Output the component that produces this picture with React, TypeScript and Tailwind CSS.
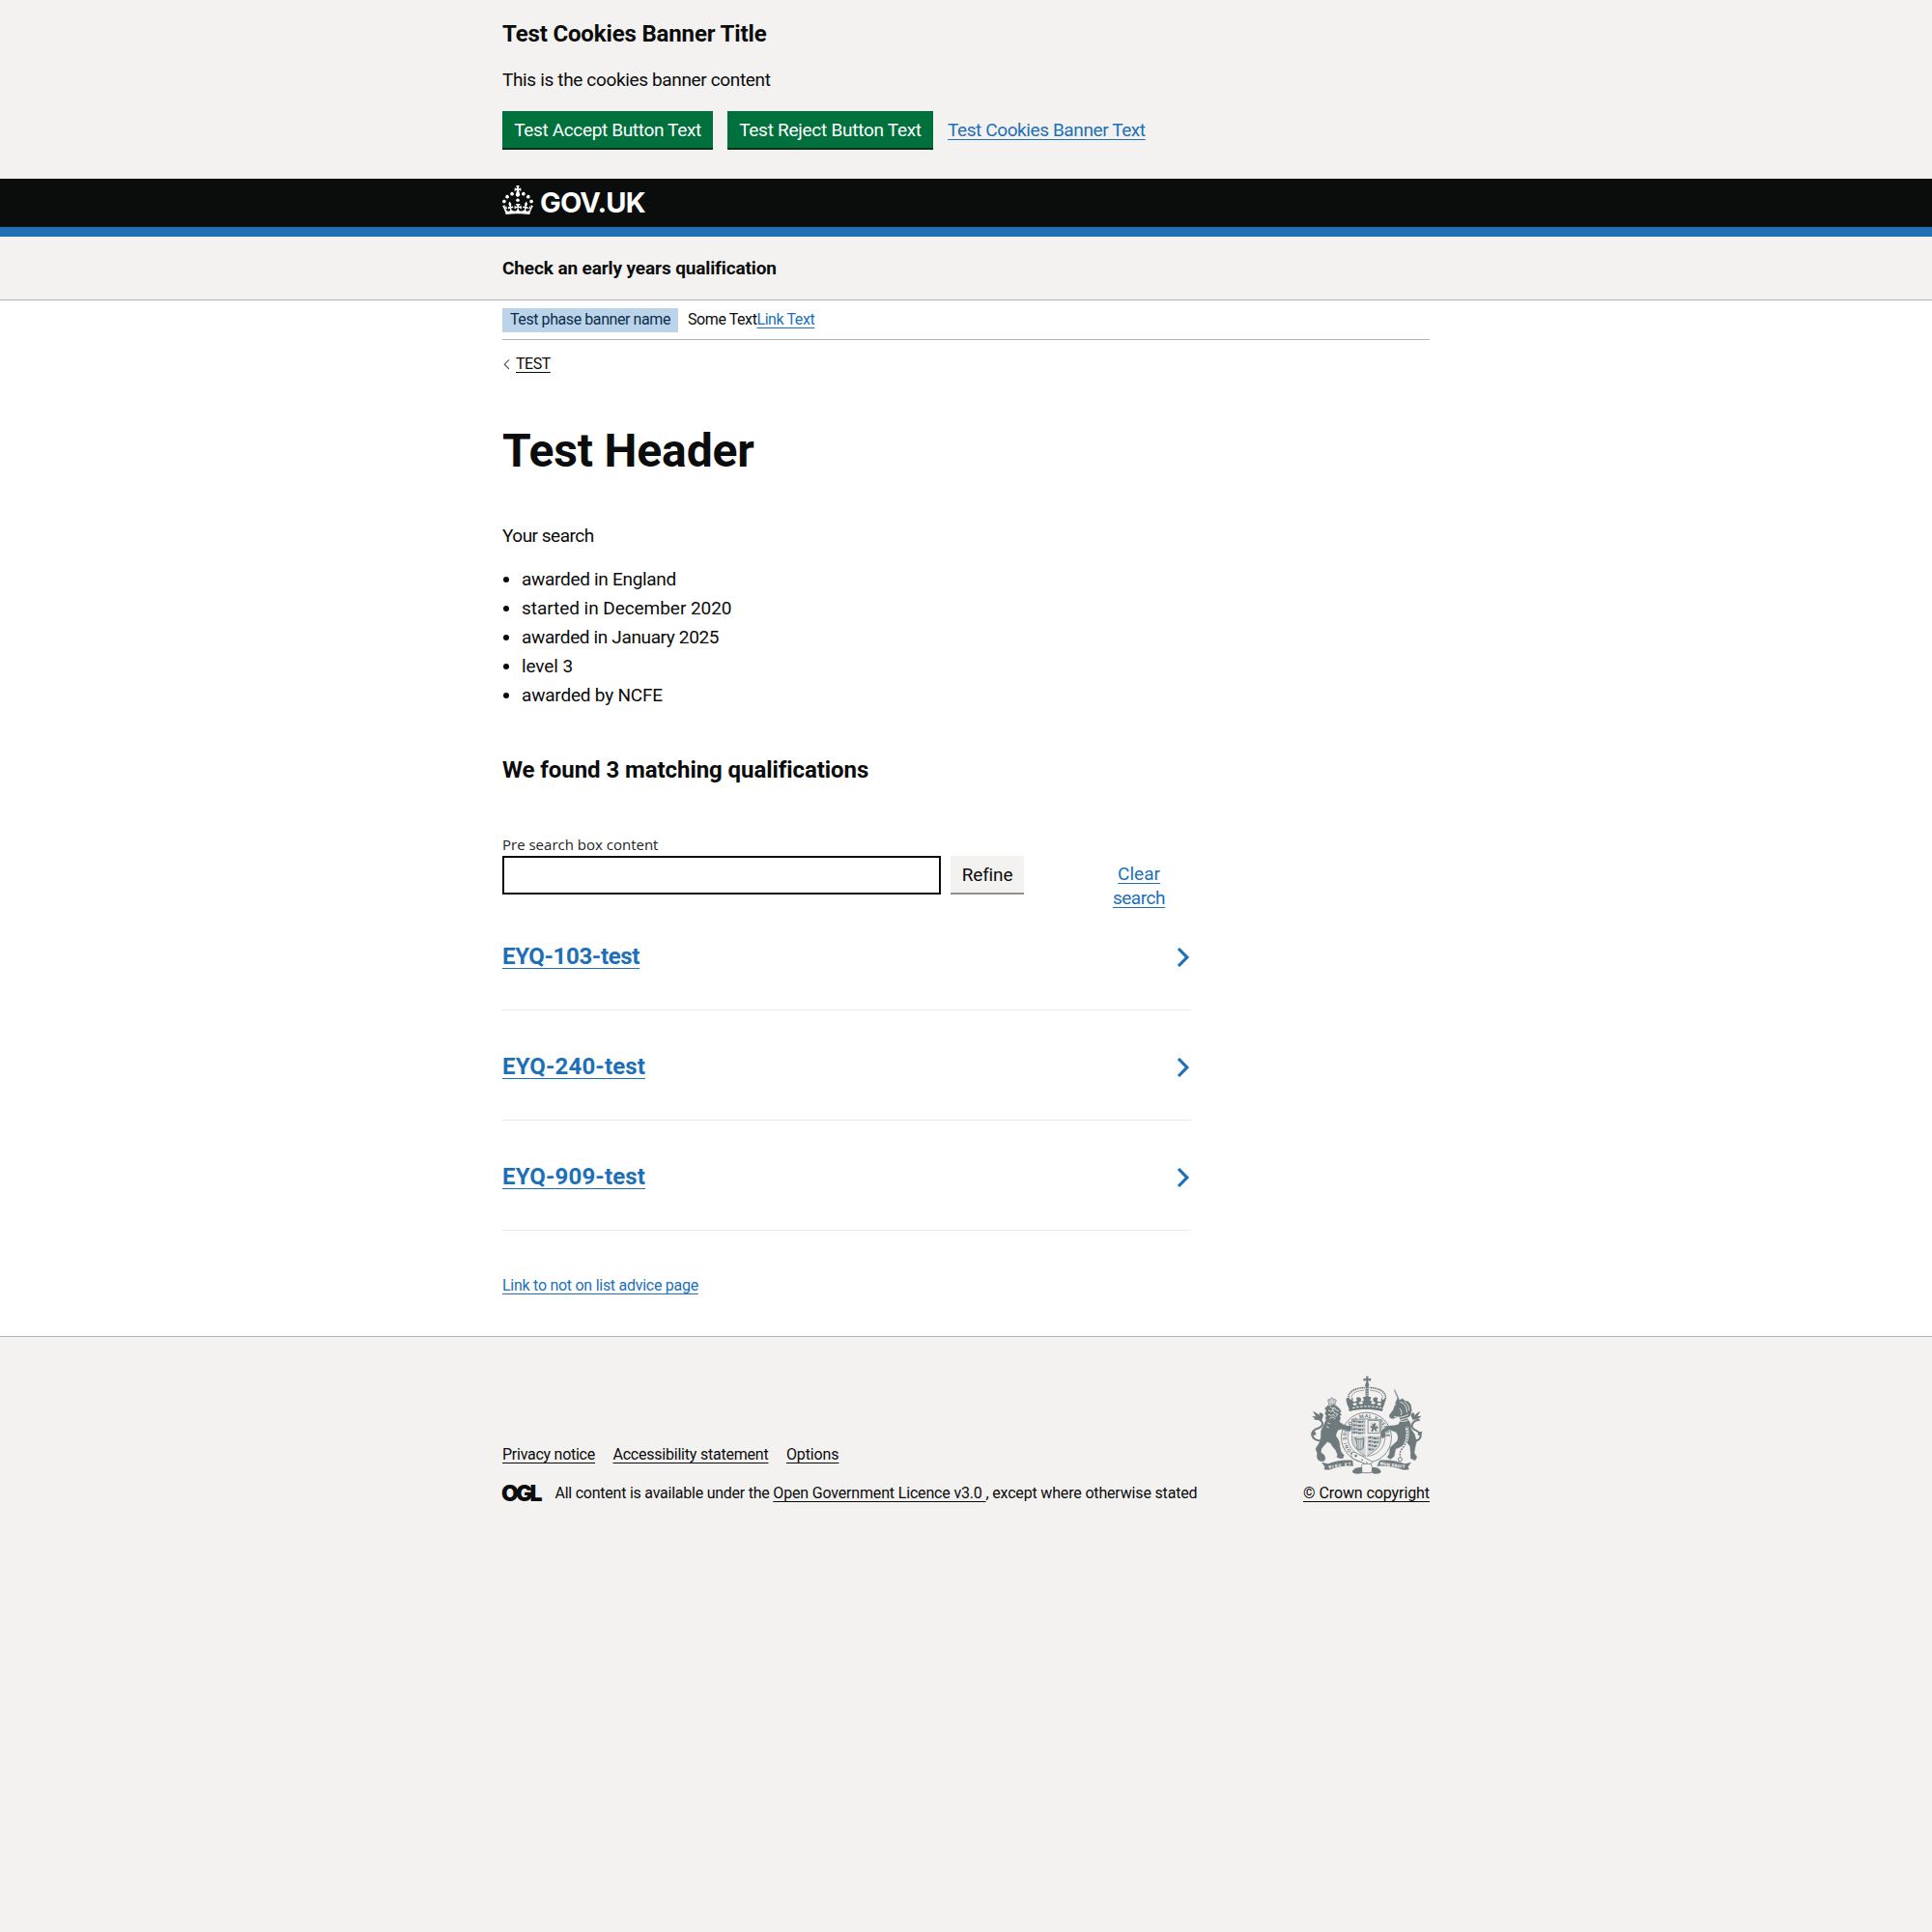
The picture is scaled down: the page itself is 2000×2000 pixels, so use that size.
import type { ReactNode } from "react";

const LINK = "text-[#1d70b8] underline decoration-1 underline-offset-[3px]";
const DARK_LINK = "text-[#0b0c0c] underline decoration-1 underline-offset-[3px]";

function Container({ children, className = "" }: { children: ReactNode; className?: string }) {
  return <div className={`mx-auto w-[960px] ${className}`}>{children}</div>;
}

function Crown() {
  return (
    <svg viewBox="0 0 32 30" width="32" height="30" fill="currentColor" aria-hidden="true">
      <path d="M22.6 10.4c-1 .4-2-.1-2.4-1-.4-.9.1-2 1-2.4.9-.4 2 .1 2.4 1s-.1 2-1 2.4m4.9 3c-1 .4-2-.1-2.4-1-.4-.9.1-2 1-2.4.9-.4 2 .1 2.4 1s0 2-1 2.4m3.3 4.8c-1 .4-2-.1-2.4-1-.4-.9.1-2 1-2.4.9-.4 2 .1 2.4 1s-.1 2-1 2.4M17 4.7l2.3 1.2V2.5l-2.3.7-.2-.2.9-3h-3.4l.9 3-.2.2c-.1.1-2.3-.7-2.3-.7v3.4L15 4.7c.1.1.1.2.2.2l-1.3 4c-.1.2-.1.4-.1.6 0 1.1.8 2 1.9 2.2h.7c1-.2 1.9-1.1 1.9-2.1 0-.2 0-.4-.1-.6l-1.3-4c-.1-.2 0-.2.1-.3m-7.6 5.7c.9.4 2-.1 2.4-1 .4-.9-.1-2-1-2.4-.9-.4-2 .1-2.4 1s0 2 1 2.4m-5 3c.9.4 2-.1 2.4-1 .4-.9-.1-2-1-2.4-.9-.4-2 .1-2.4 1s.1 2 1 2.4m-3.2 4.8c.9.4 2-.1 2.4-1 .4-.9-.1-2-1-2.4-.9-.4-2 .1-2.4 1s0 2 1 2.4m14.8 11c4.4 0 8.6.3 12.3.8 1.1-4.5 2.4-7 3.7-8.8l-2.5-.9c.2 1.3.3 1.9 0 2.7-.4-.4-.8-1.1-1.1-2.3l-1.2 4c.7-.5 1.3-.8 2-.9-1.1 2.5-2.6 3.1-3.5 3-1.1-.2-1.7-1.2-1.5-2.1.3-1.2 1.5-1.5 2.1-.1 1.1-2.3-.8-3-2-2.3 1.9-1.9 2.1-3.5.6-5.6-2.1 1.6-2.1 3.2-1.2 5.5-1.2-1.4-3.2-.6-2.5 1.6.9-1.4 2.1-.5 1.9.8-.2 1.1-1.7 2.1-3.5 1.9-2.7-.2-2.9-2.1-2.9-3.6.7-.1 1.9.5 2.9 1.9l.4-4.3c-1.1 1.1-2.1 1.4-3.2 1.4.4-1.2 2.1-3 2.1-3h-5.4s1.7 1.9 2.1 3c-1.1 0-2.1-.2-3.2-1.4l.4 4.3c1-1.4 2.2-2 2.9-1.9-.1 1.5-.2 3.4-2.9 3.6-1.9.2-3.4-.8-3.5-1.9-.2-1.3 1-2.2 1.9-.8.7-2.3-1.2-3-2.5-1.6.9-2.2.9-3.9-1.2-5.5-1.5 2-1.3 3.7.6 5.6-1.2-.7-3.1 0-2 2.3.6-1.4 1.8-1.1 2.1.1.2.9-.3 1.9-1.5 2.1-.9.2-2.4-.5-3.5-3 .6 0 1.2.3 2 .9l-1.2-4c-.3 1.1-.7 1.9-1.1 2.3-.3-.8-.2-1.4 0-2.7l-2.9.9C1.3 23 2.6 25.5 3.7 30c3.7-.5 7.9-.8 12.3-.8" />
      <circle cx="16" cy="15.3" r="1.8" />
    </svg>
  );
}

/* Royal arms: crown, garter and shield between the lion and the unicorn. */
function Crest() {
  return (
    <svg viewBox="50 25 350 307" className="h-[102px] w-[117px]" fill="#6f7a7d" stroke="none" aria-hidden="true">
      {/* crown */}
      <path d="M223 27h9l-2 8 9-2v9l-9-2 2 9h-9l2-9-9 2v-9l9 2z" />
      <circle cx="227" cy="55" r="6.5" />
      <g fill="none" stroke="#6f7a7d">
        <path d="M172 103C160 82 186 62 220 63M282 103C294 82 268 62 234 63" strokeWidth="5" strokeDasharray="4 1.6" />
        <path d="M180 98C174 82 192 72 218 71M274 98C280 82 262 72 236 71" strokeWidth="2" />
        <path d="M227 61v32" strokeWidth="10" strokeDasharray="5 1.5" />
      </g>
      <path d="M170 95l7 5 7-5-2 9c5 4 10 3 14-1l-3-9 9-2 7 5-2 7c4 3 8 0 11-2l-5-9 14-3 14 3-5 9c3 3 7 5 11 2l-2-7 7-5 9 2-3 9c4 4 9 5 14 1l-2-9 7 5 7-5c1 14-5 24-9 33 2 3 2 5-2 8-32-8-68-8-100 0-4-3-4-5-2-8-4-9-10-19-9-33z" />
      <g fill="#f3f2f1">
        <ellipse cx="189" cy="114" rx="6" ry="4" />
        <ellipse cx="208" cy="110" rx="6" ry="4" />
        <ellipse cx="246" cy="110" rx="6" ry="4" />
        <ellipse cx="265" cy="114" rx="6" ry="4" />
      </g>
      <path d="M182 126c30-7 60-7 90 0" fill="none" stroke="#f3f2f1" strokeWidth="3" strokeDasharray="8 4" />

      {/* garter */}
      <g fill="none" stroke="#6f7a7d">
        <ellipse cx="225" cy="218" rx="78" ry="78" strokeWidth="2.5" />
        <ellipse cx="225" cy="218" rx="58" ry="58" strokeWidth="2" />
      </g>
      <path id="garter-path" d="M188 268A62 62 0 1 1 262 268" fill="none" />
      <text fontFamily="Roboto" fontWeight="700" fontSize="16" letterSpacing="1.6">
        <textPath href="#garter-path">HONI SOIT QUI MAL Y PENSE</textPath>
      </text>

      {/* shield */}
      <path d="M180 161h90v62c0 26-22 40-45 54-23-14-45-28-45-54z" fill="#d2d5d5" stroke="#6f7a7d" strokeWidth="2" />
      <path d="M230 165h36v39h-36z" fill="#e8e9e8" stroke="#6f7a7d" strokeWidth="2" />
      <path d="M240 172l6 5 5-5 4 6-4 6 8-2 3 6-7 3 4 8-6-1-4-6-5 8-5-2 4-8-6-4 2-5 6 2z" />
      <g fill="none" stroke="#6f7a7d" strokeWidth="6" strokeDasharray="9 2 4 2">
        <path d="M183 168c10-4 16 5 36 0" />
        <path d="M183 180c10-4 16 5 36 0" />
        <path d="M183 192c10-4 16 5 36 0M183 203c10-4 16 5 36 0" />
        <path d="M231 219c10-4 16 5 36 0" />
        <path d="M231 231c10-4 16 5 35 0" />
        <path d="M231 243c8-4 14 5 28 0M231 255c6-2 10 3 18-1" />
      </g>
      <path d="M225 161v116M180 210h90" stroke="#f3f2f1" strokeWidth="5" />
      <path d="M189 219c6 0 8 5 15 4 6 0 8-4 13-3l-2 31c-8 8-16 6-20 0 4-10 0-20-6-32z" fill="#a9b0b1" stroke="#6f7a7d" strokeWidth="3" />
      <path d="M198 226v24M204 227v26M210 226v26" stroke="#f3f2f1" strokeWidth="1.5" />

      {/* lion */}
      <path d="M105 101l4-3 2 4 3-6 4-3 3 3 3 6 3-4 4 4-4 13h-19z" fill="#c9cdcd" stroke="#6f7a7d" strokeWidth="2" />
      <path
        d="M105 118l8 1 10-4 9 5 9 8 5 9-4 4 5 5-5 5 2 8-4 9c8 7 15 13 27 14l8-1 3 6-3 10-6 1-10-4-12-2-10 2c-5 8-7 13-7 20 7 9 12 16 12 32l4 17 9 10-3 9-9 1-10-4 2-9-6-13-8-9-8-13-10-4-9 11-9 10-2 12 10 8 4 10-4 9-10 1-9-5-3-10 1-11-5-12 4-8 7-10 5-16 1-23 9-20 7-14-3-6 4-6-5-8 4-8-4-8z"
        stroke="#6f7a7d"
        strokeWidth="1.5"
      />
      <path d="M112 121l6 7 8-3 5 8 8 2M106 133l9 4 7-3 4 8 8 2M106 146l10 4 6-4 6 8M110 160l9-6 9 6M124 128l-6 5M136 144l-5 8M104 172l8 3M100 184l8 3" fill="none" stroke="#f3f2f1" strokeWidth="2.5" />
      <path d="M92 228c-12 2-30-2-35-14-6-13 7-22 18-25 12-4 17-14 10-22-6-8-14-8-22-7" fill="none" stroke="#6f7a7d" strokeWidth="6" />
      <path d="M58 136c13 4 22 11 25 24-12 4-21 0-27-9l12 2zM78 142c7-3 11 1 13 7l-6 18-7-14zM55 200c8-3 14 1 13 9l-10 3z" />

      {/* unicorn */}
      <path d="M310 68l4 1 14 29-5 3z" fill="#8f999b" />
      <path d="M319 102l4-6 5 6 9-5 10 8 8 1 8 10 3 18-5 16-9 9c8 8 13 18 12 33l11 16 6 22-5 22-2 13 8 14-5 10-14-6 0-18-2-20-12-14c-8 12-21 18-33 22l-5 24-11 8-10-6 7-10 2-20 22-20c4-9 4-19-4-28l-21-8-14 8 3 12-10 8-5-9 3-16 20-14 19-1 14-4 5-14-5-11-9 3-10 5-9-4-1-8 12-16z" stroke="#6f7a7d" strokeWidth="1.5" />
      <path d="M330 107c14 5 21 15 21 33M328 127c7 5 8 14 5 21M342 106c12 7 16 16 16 28M307 160c15 10 32 0 52-4M311 152c17 8 33-1 45-5M325 166c10 3 20 2 30-2" fill="none" stroke="#f3f2f1" strokeWidth="2.7" />
      <circle cx="316" cy="115" r="2" fill="#f3f2f1" />
      <path d="M350 184c9 28-1 55-14 69-8 10-7 18-5 27" fill="none" stroke="#f3f2f1" strokeWidth="8" />
      <path d="M350 184c9 28-1 55-14 69-8 10-7 18-5 27" fill="none" stroke="#6f7a7d" strokeWidth="4" strokeDasharray="6 3" />
      <circle cx="330" cy="286" r="6" fill="none" stroke="#6f7a7d" strokeWidth="3" />
      <path d="M364 226c17 5 29-1 30-13 0-11-11-16-20-20-9-5-9-15-3-22 6-7 15-8 20-7" fill="none" stroke="#6f7a7d" strokeWidth="6" />
      <path d="M393 136c-12 5-20 12-22 25 10 3 19-1 25-10l-12 1zM374 141c-7-1-11 3-10 10l6 14 5-12zM399 200c-9-2-15 2-14 10l10 3z" />

      {/* motto scrolls */}
      <path d="M85 295l20 5c26-10 49-14 77-11l2 18c-28-3-51 3-77 12l-14-1 2-9z" />
      <path d="M365 295l-20 5c-26-10-51-14-79-11l-8 18c29-3 57 3 83 12l17-1-3-9z" />
      <g fill="#f3f2f1" fontFamily="Roboto" fontWeight="900" fontSize="13">
        <text transform="translate(108 315) rotate(-9)" textLength="70">DIEU ET</text>
        <text transform="translate(267 303) rotate(8)" textLength="78">MON DROIT</text>
      </g>

      {/* buckle and base */}
      <g fill="#f3f2f1" stroke="#6f7a7d" strokeWidth="2.5">
        <path d="M180 266c-4 10 0 17 9 20l46 20 9-12-45-25c-7-5-15-8-19-3z" />
        <path d="M214 300c-8 8-6 20-1 28h26c6-8 6-20-2-28z" />
      </g>
      <circle cx="192" cy="275" r="4" />
      <circle cx="212" cy="288" r="2.5" />
      <circle cx="226" cy="296" r="2.5" />
      <path d="M184 319c5-7 18-10 28-7v16c-8 4-20 4-27 1-4-3-5-6-1-10zM268 319c-5-7-16-10-26-7v16c8 4 18 4 25 1 4-3 5-6 1-10z" />
    </svg>
  );
}

const criteria = [
  { text: "awarded in England", tracking: "tracking-[-0.3px]" },
  { text: "started in December 2020", tracking: "tracking-[-0.05px]" },
  { text: "awarded in January 2025", tracking: "tracking-[-0.36px]" },
  { text: "level 3", tracking: "tracking-[-0.1px]" },
  { text: "awarded by NCFE", tracking: "tracking-[-0.2px]" },
];

const results = [
  { name: "EYQ-103-test", tracking: "tracking-[-0.36px]" },
  { name: "EYQ-240-test", tracking: "tracking-[0.14px]" },
  { name: "EYQ-909-test", tracking: "tracking-[0.14px]" },
];

export default function App() {
  return (
    <div className="flex min-h-[2000px] flex-col bg-[#f3f2f1] font-['Roboto',sans-serif] text-[19px] leading-[25px] text-[#0b0c0c]">
      <section className="h-[185px] pt-5">
        <Container>
          <h2 className="mb-5 text-[24px] leading-[30px] font-bold tracking-[-0.15px]">Test Cookies Banner Title</h2>
          <p className="mb-5 tracking-[-0.35px]">This is the cookies banner content</p>
          <div className="flex items-start">
            <button className="mr-[15px] h-[38px] w-[218px] bg-[#00703c] pt-px tracking-[-0.34px] text-white shadow-[0_2px_0_#002d18]">
              Test Accept Button Text
            </button>
            <button className="mr-[15px] h-[38px] w-[213px] bg-[#00703c] pt-px tracking-[-0.27px] text-white shadow-[0_2px_0_#002d18]">
              Test Reject Button Text
            </button>
            <a className={`mt-[7px] tracking-[-0.4px] ${LINK}`}>Test Cookies Banner Text</a>
          </div>
        </Container>
      </section>

      <header className="h-[60px] border-b-[10px] border-[#1d70b8] bg-[#0b0c0c] text-white">
        <Container className="flex pt-[7px]">
          <Crown />
          <span className="ml-[7px] font-['Inter',sans-serif] text-[29px] leading-[35px] font-bold tracking-[-0.8px]">
            GOV.UK
          </span>
        </Container>
      </header>

      <div className="h-[66px] border-b border-[#b1b4b6] pt-5">
        <Container className="font-bold tracking-[-0.12px]">Check an early years qualification</Container>
      </div>

      <div className="h-[1072px] bg-white">
        <Container>
          <div className="flex h-[41px] items-start border-b border-[#b1b4b6] pt-2 text-[16px] leading-5">
            <strong className="mr-[10px] h-[25px] w-[182px] bg-[#bbd4ea] pt-0.5 pl-2 font-normal tracking-[-0.42px] text-[#0c2d4a]">
              Test phase banner name
            </strong>
            <span className="pt-0.5 tracking-[-0.42px]">
              Some Text<a className={LINK}>Link Text</a>
            </span>
          </div>

          <div className="mt-[15px] flex text-[16px] leading-5">
            <svg width="8" height="12" viewBox="0 0 8 12" className="mt-1 mr-1.5 ml-px" fill="none" stroke="#505a5f" strokeWidth="1.2">
              <path d="M6 1.4L1.2 6.2 6 11" />
            </svg>
            <a className={`-ml-px tracking-[-0.45px] ${DARK_LINK}`}>TEST</a>
          </div>

          <h1 className="mt-[55px] text-[48px] leading-[50px] font-bold tracking-[-0.15px]">Test Header</h1>

          <p className="mt-[50px] tracking-[-0.5px]">Your search</p>
          <ul className="mt-5 list-none">
            {criteria.map((c) => (
              <li key={c.text} className={`mb-[5px] flex items-center ${c.tracking}`}>
                <span className="mr-[13px] ml-px size-1.5 rounded-full bg-[#0b0c0c]" />
                {c.text}
              </li>
            ))}
          </ul>

          <h2 className="mt-[50px] text-[24px] leading-[30px] font-bold tracking-[-0.07px]">
            We found 3 matching qualifications
          </h2>

          <div className="w-[713px]">
            <label className="mt-[51px] mb-px block font-['Open_Sans',sans-serif] text-[15px] leading-[22px] text-[#212529]">
              Pre search box content
            </label>
            <div className="flex h-[89px] items-start">
              <input className="h-10 w-[454px] border-2 border-[#0b0c0c] bg-white" />
              <button className="ml-[10px] h-[38px] w-[76px] bg-[#f3f2f1] pt-px tracking-[-0.15px] shadow-[0_2px_0_#929191]">
                Refine
              </button>
              <a className={`mt-1.5 ml-[91px] w-[56px] text-center ${LINK}`}>
                Clear <span className="tracking-[-0.45px]">search</span>
              </a>
            </div>

            {results.map((r) => (
              <div
                key={r.name}
                className="mb-[43px] flex h-[71px] items-start justify-between border-b border-[#e9eaea]"
              >
                <a className={`text-[24px] leading-[30px] font-bold underline-offset-4 ${r.tracking} text-[#1d70b8] underline decoration-1`}>
                  {r.name}
                </a>
                <svg width="14" height="22" viewBox="0 0 14 22" className="mt-[5px] mr-px" fill="none" stroke="#1d70b8" strokeWidth="3.2">
                  <path d="M2 2l8.8 9L2 20" />
                </svg>
              </div>
            ))}
          </div>

          <div className="flex pt-1 text-[16px] leading-5 tracking-[-0.27px]">
            <a className={LINK}>Link to not on list advice page</a>
          </div>
        </Container>
      </div>

      <footer className="border-t border-[#b1b4b6] text-[16px] leading-5">
        <Container className="flex justify-between pt-10">
          <div className="pt-[72px]">
            <div className="flex">
              <a className={`mr-[18.5px] tracking-[-0.26px] ${DARK_LINK}`}>Privacy notice</a>
              <a className={`mr-[18.5px] tracking-[-0.22px] ${DARK_LINK}`}>Accessibility statement</a>
              <a className={`tracking-[-0.12px] ${DARK_LINK}`}>Options</a>
            </div>
            <div className="mt-5 flex">
              <span className="-ml-px w-[55.5px] font-['Inter',sans-serif] text-[23px] leading-5 font-black tracking-[-2.8px]">
                OGL
              </span>
              <span className="whitespace-pre tracking-[-0.24px]">
                All content is available under the{" "}
                <a className={`tracking-[-0.17px] ${DARK_LINK}`}>Open Government Licence v3.0 </a>
                <span className="tracking-[-0.17px]">, except where otherwise stated</span>
              </span>
            </div>
          </div>
          <div className="flex flex-col items-center">
            <Crest />
            <a className={`mt-[10px] tracking-[-0.09px] ${DARK_LINK}`}>© Crown copyright</a>
          </div>
        </Container>
      </footer>
    </div>
  );
}
